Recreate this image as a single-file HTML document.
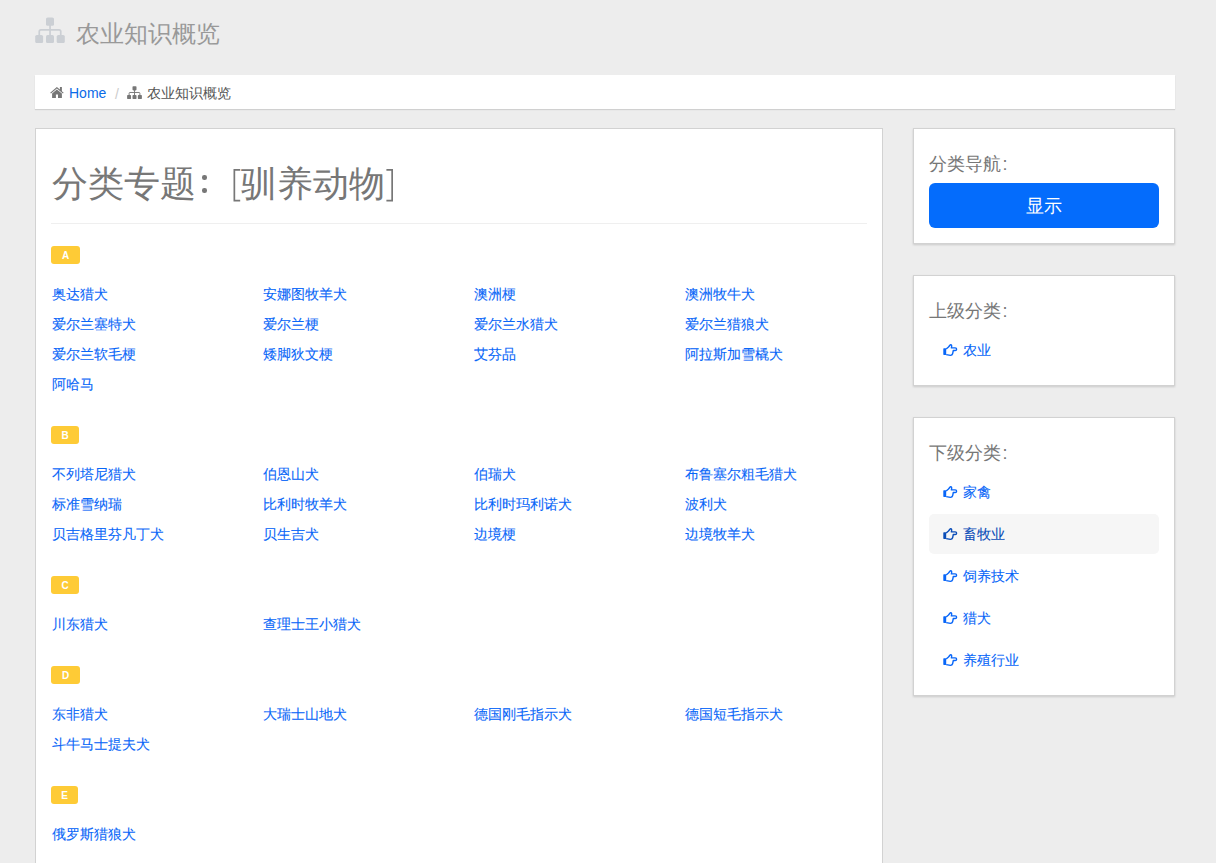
<!DOCTYPE html>
<html><head><meta charset="utf-8">
<style>
*{box-sizing:border-box;margin:0;padding:0}
html,body{width:1216px;height:863px;overflow:hidden;background:#ededed;font-family:"Liberation Sans",sans-serif;}
a{text-decoration:none;color:#0a6be8}
.abs{position:absolute}
.hdr-icon{left:35px;top:17px;width:30px;height:26px}
.hdr-text{left:76px;top:18px;font-size:24px;line-height:32px;color:#999;font-weight:300;white-space:nowrap}
.bc{left:35px;top:75px;width:1140px;height:34px;background:#fff;box-shadow:0 1px 1px rgba(0,0,0,.12)}
.bc-home{left:50px;top:86px;width:14px;height:12px}
.bc-t1{left:69px;top:83px;font-size:14px;line-height:20px;color:#0a6be8;white-space:nowrap}
.bc-sl{left:115px;top:84px;font-size:14px;line-height:20px;color:#ccc}
.bc-ic{left:127px;top:86px;width:15px;height:13px}
.bc-t2{left:147px;top:83px;font-size:14px;line-height:20px;color:#555;white-space:nowrap}
.main{left:35px;top:128px;width:848px;height:760px;background:#fff;border:1px solid #d2d2d2}
.title{left:52px;top:159px;font-size:36px;line-height:50px;color:#777;font-weight:300;white-space:nowrap}
.dot{left:202px;width:4.5px;height:4.5px;border-radius:50%;background:#777}
.hr{left:51px;top:223px;width:816px;height:1px;background:#efefef}
.badge{position:absolute;left:51px;height:18px;background:#fecb36;border-radius:3px;color:#fff;font-weight:bold;font-size:10px;line-height:19px;text-align:center}
.lk{position:absolute;font-size:14px;line-height:20px;white-space:nowrap;color:#0866f8;margin-top:1px;margin-left:-0.5px;-webkit-text-stroke:0.1px currentColor}
.side{left:913px;width:262px;background:#fff;border:1px solid #d2d2d2;box-shadow:0 1px 2px rgba(0,0,0,.15)}
.sh{position:absolute;left:929px;font-size:18px;line-height:24px;color:#777;white-space:nowrap}
.btn{left:929px;top:183px;width:230px;height:45px;background:#046cfc;border-radius:6px;color:#fff;font-size:18px;line-height:47px;text-align:center}
.hov{left:929px;top:514px;width:230px;height:40px;background:#f6f6f6;border-radius:5px}
.thumb{position:absolute;left:943px;width:15px;height:13px;color:#0866f8}
.st{position:absolute;left:963px;font-size:14px;line-height:20px;color:#0866f8;white-space:nowrap;-webkit-text-stroke:0.1px currentColor}
</style></head><body>
<!-- header -->
<svg class="abs hdr-icon" viewBox="0 0 30 26"><g fill="#cbcfd4"><rect x="11" y="0.4" width="8" height="8.4" rx="1.6"/><rect x="0.2" y="17.9" width="7.9" height="8.2" rx="1.6"/><rect x="11" y="17.9" width="8" height="8.2" rx="1.6"/><rect x="21.7" y="17.9" width="8.1" height="8.2" rx="1.6"/><rect x="14.2" y="8" width="1.7" height="10.5"/></g><path fill="none" stroke="#cbcfd4" stroke-width="1.7" d="M4.25 18.5 V14.6 Q4.25 12.95 5.9 12.95 H24.1 Q25.75 12.95 25.75 14.6 V18.5"/></svg>
<div class="abs hdr-text">农业知识概览</div>

<div class="abs bc"></div>
<svg class="abs bc-home" viewBox="0 0 14 12"><path fill="#777" d="M0.2 6.7 L6.85 0.9 L9.9 3.55 V1 H11.9 V5.3 L13.7 6.7 L12.9 7.6 L6.85 2.4 L1 7.6 Z M2.1 7.6 L6.85 3.6 L11.9 7.6 V11.9 H8 V8.6 H5.9 V11.9 H2.1 Z"/></svg>
<div class="abs bc-t1">Home</div>
<div class="abs bc-sl">/</div>
<svg class="abs bc-ic" viewBox="0 0 30 26"><g fill="#777"><rect x="11" y="0.4" width="8" height="8.4" rx="1.6"/><rect x="0.2" y="17.9" width="7.9" height="8.2" rx="1.6"/><rect x="11" y="17.9" width="8" height="8.2" rx="1.6"/><rect x="21.7" y="17.9" width="8.1" height="8.2" rx="1.6"/><rect x="14.2" y="8" width="1.8" height="10.5"/></g><path fill="none" stroke="#777" stroke-width="1.9" d="M4.25 18.5 V14.6 Q4.25 12.95 5.9 12.95 H24.1 Q25.75 12.95 25.75 14.6 V18.5"/></svg>
<div class="abs bc-t2">农业知识概览</div>

<!-- main -->
<div class="abs main"></div>
<div class="abs title">分类专题</div><div class="abs dot" style="top:175px"></div><div class="abs dot" style="top:188px"></div><div class="abs title" style="left:241px">驯养动物</div><svg class="abs" style="left:230px;top:165px" width="170" height="40" viewBox="230 165 170 40"><path fill="none" stroke="#777" stroke-width="1.7" d="M240.2 169.85 H234.35 V200.65 H240.2 M386.4 169.85 H392.15 V200.65 H386.4"/></svg>
<div class="abs hr"></div>

<div class="badge" style="top:246px;width:29px">A</div>
<a class="lk" style="left:52px;top:283px">奥达猎犬</a>
<a class="lk" style="left:263px;top:283px">安娜图牧羊犬</a>
<a class="lk" style="left:474px;top:283px">澳洲梗</a>
<a class="lk" style="left:685px;top:283px">澳洲牧牛犬</a>
<a class="lk" style="left:52px;top:313px">爱尔兰塞特犬</a>
<a class="lk" style="left:263px;top:313px">爱尔兰梗</a>
<a class="lk" style="left:474px;top:313px">爱尔兰水猎犬</a>
<a class="lk" style="left:685px;top:313px">爱尔兰猎狼犬</a>
<a class="lk" style="left:52px;top:343px">爱尔兰软毛梗</a>
<a class="lk" style="left:263px;top:343px">矮脚狄文梗</a>
<a class="lk" style="left:474px;top:343px">艾芬品</a>
<a class="lk" style="left:685px;top:343px">阿拉斯加雪橇犬</a>
<a class="lk" style="left:52px;top:373px">阿哈马</a>

<div class="badge" style="top:426px;width:28px">B</div>
<a class="lk" style="left:52px;top:463px">不列塔尼猎犬</a>
<a class="lk" style="left:263px;top:463px">伯恩山犬</a>
<a class="lk" style="left:474px;top:463px">伯瑞犬</a>
<a class="lk" style="left:685px;top:463px">布鲁塞尔粗毛猎犬</a>
<a class="lk" style="left:52px;top:493px">标准雪纳瑞</a>
<a class="lk" style="left:263px;top:493px">比利时牧羊犬</a>
<a class="lk" style="left:474px;top:493px">比利时玛利诺犬</a>
<a class="lk" style="left:685px;top:493px">波利犬</a>
<a class="lk" style="left:52px;top:523px">贝吉格里芬凡丁犬</a>
<a class="lk" style="left:263px;top:523px">贝生吉犬</a>
<a class="lk" style="left:474px;top:523px">边境梗</a>
<a class="lk" style="left:685px;top:523px">边境牧羊犬</a>

<div class="badge" style="top:576px;width:28px">C</div>
<a class="lk" style="left:52px;top:613px">川东猎犬</a>
<a class="lk" style="left:263px;top:613px">查理士王小猎犬</a>

<div class="badge" style="top:666px;width:29px">D</div>
<a class="lk" style="left:52px;top:703px">东非猎犬</a>
<a class="lk" style="left:263px;top:703px">大瑞士山地犬</a>
<a class="lk" style="left:474px;top:703px">德国刚毛指示犬</a>
<a class="lk" style="left:685px;top:703px">德国短毛指示犬</a>
<a class="lk" style="left:52px;top:733px">斗牛马士提夫犬</a>

<div class="badge" style="top:786px;width:27px">E</div>
<a class="lk" style="left:52px;top:823px">俄罗斯猎狼犬</a>

<!-- sidebar -->
<div class="abs side" style="top:128px;height:116px"></div>
<div class="sh" style="top:152px">分类导航<span style="margin-left:1.5px">:</span></div>
<div class="abs btn">显示</div>

<div class="abs side" style="top:275px;height:111px"></div>
<div class="sh" style="top:299px">上级分类<span style="margin-left:1.5px">:</span></div>
<svg class="thumb" style="top:344px" viewBox="0 0 15 13"><rect x="0.3" y="4.3" width="2.9" height="6.6" rx="0.6" fill="currentColor"/><path fill="none" stroke="currentColor" stroke-width="1.4" stroke-linejoin="round" d="M3.2 5 L5.5 3 L7.1 1 Q7.8 0.4 8.4 1 L8.7 2 L8.4 3.9 L12.2 3.9 Q13.6 3.9 13.6 5.2 Q13.6 6.5 12.2 6.5 L10.3 6.5 L9.6 9.8 Q9.2 11.3 7.5 11.4 L3.2 10.6"/></svg>
<a class="st" style="top:340px">农业</a>

<div class="abs side" style="top:417px;height:279px"></div>
<div class="sh" style="top:441px">下级分类<span style="margin-left:1.5px">:</span></div>
<div class="abs hov"></div>
<svg class="thumb" style="top:486px" viewBox="0 0 15 13"><rect x="0.3" y="4.3" width="2.9" height="6.6" rx="0.6" fill="currentColor"/><path fill="none" stroke="currentColor" stroke-width="1.4" stroke-linejoin="round" d="M3.2 5 L5.5 3 L7.1 1 Q7.8 0.4 8.4 1 L8.7 2 L8.4 3.9 L12.2 3.9 Q13.6 3.9 13.6 5.2 Q13.6 6.5 12.2 6.5 L10.3 6.5 L9.6 9.8 Q9.2 11.3 7.5 11.4 L3.2 10.6"/></svg>
<a class="st" style="top:482px">家禽</a>
<svg class="thumb" style="top:528px;color:#0a4db8" viewBox="0 0 15 13"><rect x="0.3" y="4.3" width="2.9" height="6.6" rx="0.6" fill="currentColor"/><path fill="none" stroke="currentColor" stroke-width="1.4" stroke-linejoin="round" d="M3.2 5 L5.5 3 L7.1 1 Q7.8 0.4 8.4 1 L8.7 2 L8.4 3.9 L12.2 3.9 Q13.6 3.9 13.6 5.2 Q13.6 6.5 12.2 6.5 L10.3 6.5 L9.6 9.8 Q9.2 11.3 7.5 11.4 L3.2 10.6"/></svg>
<a class="st" style="top:524px;color:#0a4db8">畜牧业</a>
<svg class="thumb" style="top:570px" viewBox="0 0 15 13"><rect x="0.3" y="4.3" width="2.9" height="6.6" rx="0.6" fill="currentColor"/><path fill="none" stroke="currentColor" stroke-width="1.4" stroke-linejoin="round" d="M3.2 5 L5.5 3 L7.1 1 Q7.8 0.4 8.4 1 L8.7 2 L8.4 3.9 L12.2 3.9 Q13.6 3.9 13.6 5.2 Q13.6 6.5 12.2 6.5 L10.3 6.5 L9.6 9.8 Q9.2 11.3 7.5 11.4 L3.2 10.6"/></svg>
<a class="st" style="top:566px">饲养技术</a>
<svg class="thumb" style="top:612px" viewBox="0 0 15 13"><rect x="0.3" y="4.3" width="2.9" height="6.6" rx="0.6" fill="currentColor"/><path fill="none" stroke="currentColor" stroke-width="1.4" stroke-linejoin="round" d="M3.2 5 L5.5 3 L7.1 1 Q7.8 0.4 8.4 1 L8.7 2 L8.4 3.9 L12.2 3.9 Q13.6 3.9 13.6 5.2 Q13.6 6.5 12.2 6.5 L10.3 6.5 L9.6 9.8 Q9.2 11.3 7.5 11.4 L3.2 10.6"/></svg>
<a class="st" style="top:608px">猎犬</a>
<svg class="thumb" style="top:654px" viewBox="0 0 15 13"><rect x="0.3" y="4.3" width="2.9" height="6.6" rx="0.6" fill="currentColor"/><path fill="none" stroke="currentColor" stroke-width="1.4" stroke-linejoin="round" d="M3.2 5 L5.5 3 L7.1 1 Q7.8 0.4 8.4 1 L8.7 2 L8.4 3.9 L12.2 3.9 Q13.6 3.9 13.6 5.2 Q13.6 6.5 12.2 6.5 L10.3 6.5 L9.6 9.8 Q9.2 11.3 7.5 11.4 L3.2 10.6"/></svg>
<a class="st" style="top:650px">养殖行业</a>
</body></html>
